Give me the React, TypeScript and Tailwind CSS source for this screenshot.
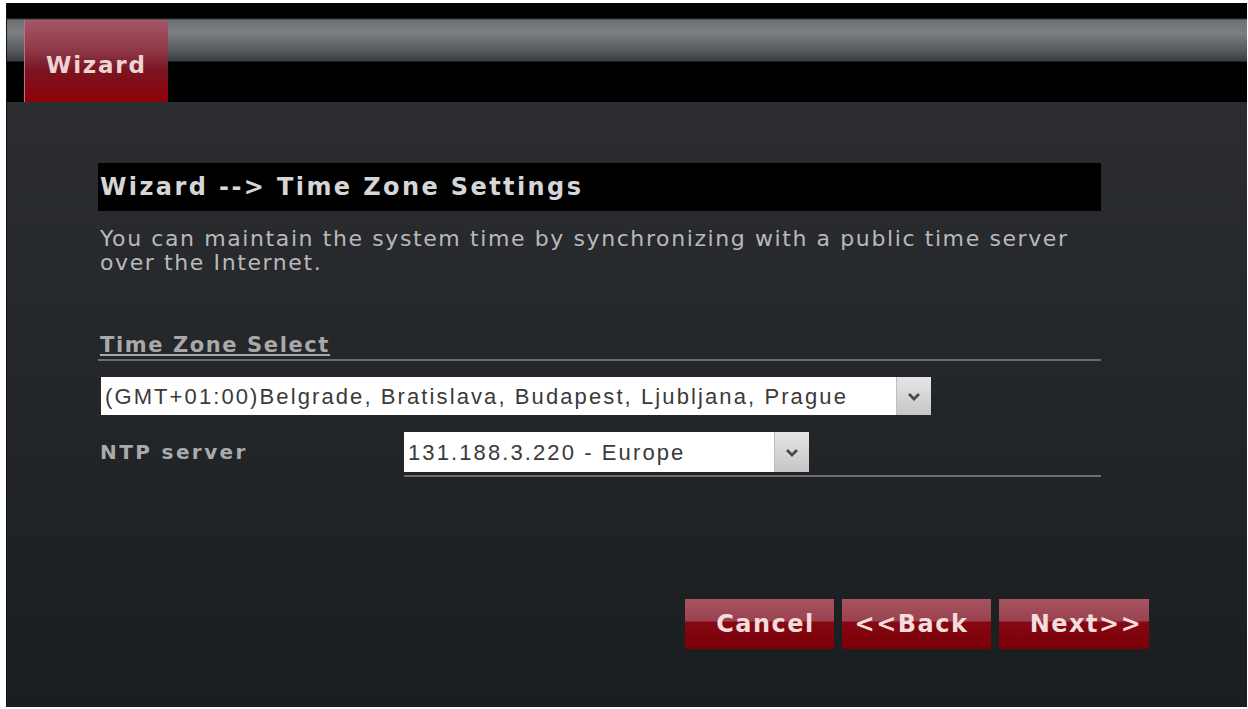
import React from "react";

const bodyFont = { fontFamily: '"DejaVu Sans", Verdana, sans-serif' };
const fieldFont = { fontFamily: '"Liberation Sans", Arial, sans-serif' };

function SelectBox({ value, width }: { value: string; width: string }) {
  return (
    <div className={`flex h-full items-stretch bg-white ${width}`}>
      <div
        className="flex flex-1 items-center truncate pl-[4px] text-[22px] tracking-[2.1px] text-[#3a3a3a]"
        style={fieldFont}
      >
        {value}
      </div>
      <div className="flex w-[35px] items-center justify-center border-l border-[#bcbcbc] bg-gradient-to-b from-[#e6e6e6] to-[#c6c6c6]">
        <svg width="16" height="11" viewBox="0 0 16 11">
          <path d="M3 3 L8 8 L13 3" fill="none" stroke="#4a4a4a" strokeWidth="2.8" />
        </svg>
      </div>
    </div>
  );
}

function RedButton({ label, className }: { label: string; className: string }) {
  return (
    <button
      className={`flex h-[50px] items-center justify-center bg-[linear-gradient(to_bottom,#a65460_0%,#9a4150_44%,#860812_46%,#7a0008_100%)] text-[24px] font-bold tracking-[1.5px] text-[#f2dcdc] ${className}`}
      style={bodyFont}
    >
      {label}
    </button>
  );
}

export default function App() {
  return (
    <div className="h-[709px] w-[1248px] bg-white pb-[2px] pl-[6px] pr-px pt-[3px]">
      <div className="flex h-full flex-col border-l border-[#111] bg-gradient-to-b from-[#2e3034] to-[#1b1e21]">
        {/* top navigation strip */}
        <div className="flex h-[99px] bg-[linear-gradient(to_bottom,#000_0px,#000_15px,#6e7174_17px,#7c7f82_30px,#55585c_48px,#3a3c40_58px,#000_59px,#000_99px)] pl-[17px] pt-[17px]">
          <div
            className="flex h-[82px] w-[144px] items-center border-l border-[#c07080] bg-[linear-gradient(to_bottom,#a45868_0%,#8c3444_40%,#7a1622_60%,#8e0006_100%)] pl-[21px] pt-[9px] text-[23px] font-bold tracking-[1.8px] text-[#ecd4d4]"
            style={bodyFont}
          >
            Wizard
          </div>
        </div>

        <div className="flex flex-1 flex-col pl-[91px]" style={bodyFont}>
          <div className="mt-[61px] flex h-[48px] w-[1003px] items-center bg-black pl-[2px] text-[24px] font-bold tracking-[2.4px] text-[#d6d6d6]">
            Wizard --&gt; Time Zone Settings
          </div>
          <p className="mt-[16px] w-[1003px] pl-[2px] text-[22px] leading-[24px] tracking-[1.6px] text-[#b9b9b9]">
            You can maintain the system time by synchronizing with a public time server
            <br />
            over the Internet.
          </p>

          <div className="mt-[59px] w-[1003px] border-b-2 border-[#6c6c6c] pl-[2px]">
            <span className="text-[21px] font-bold leading-[22px] tracking-[1.6px] text-[#a9a9a9] underline underline-offset-2">
              Time Zone Select
            </span>
          </div>

          <div className="mt-[16px] h-[38px] pl-[3px]">
            <SelectBox value="(GMT+01:00)Belgrade, Bratislava, Budapest, Ljubljana, Prague" width="w-[830px]" />
          </div>

          <div className="mt-[17px] flex h-[40px] items-center">
            <div className="w-[306px] pl-[2px] text-[20px] font-bold tracking-[2.4px] text-[#aaaaaa]">NTP server</div>
            <SelectBox value="131.188.3.220 - Europe" width="w-[405px]" />
          </div>
          <div className="ml-[306px] mt-[3px] h-[2px] w-[697px] bg-[#6c6c6c]" />

          <div className="ml-[587px] mt-[122px] flex gap-[8px]">
            <RedButton label="Cancel" className="w-[149px] pl-[12px]" />
            <RedButton label="<<Back" className="w-[149px] pr-[10px]" />
            <RedButton label="Next>>" className="w-[150px] pl-[24px]" />
          </div>
        </div>
      </div>
    </div>
  );
}
